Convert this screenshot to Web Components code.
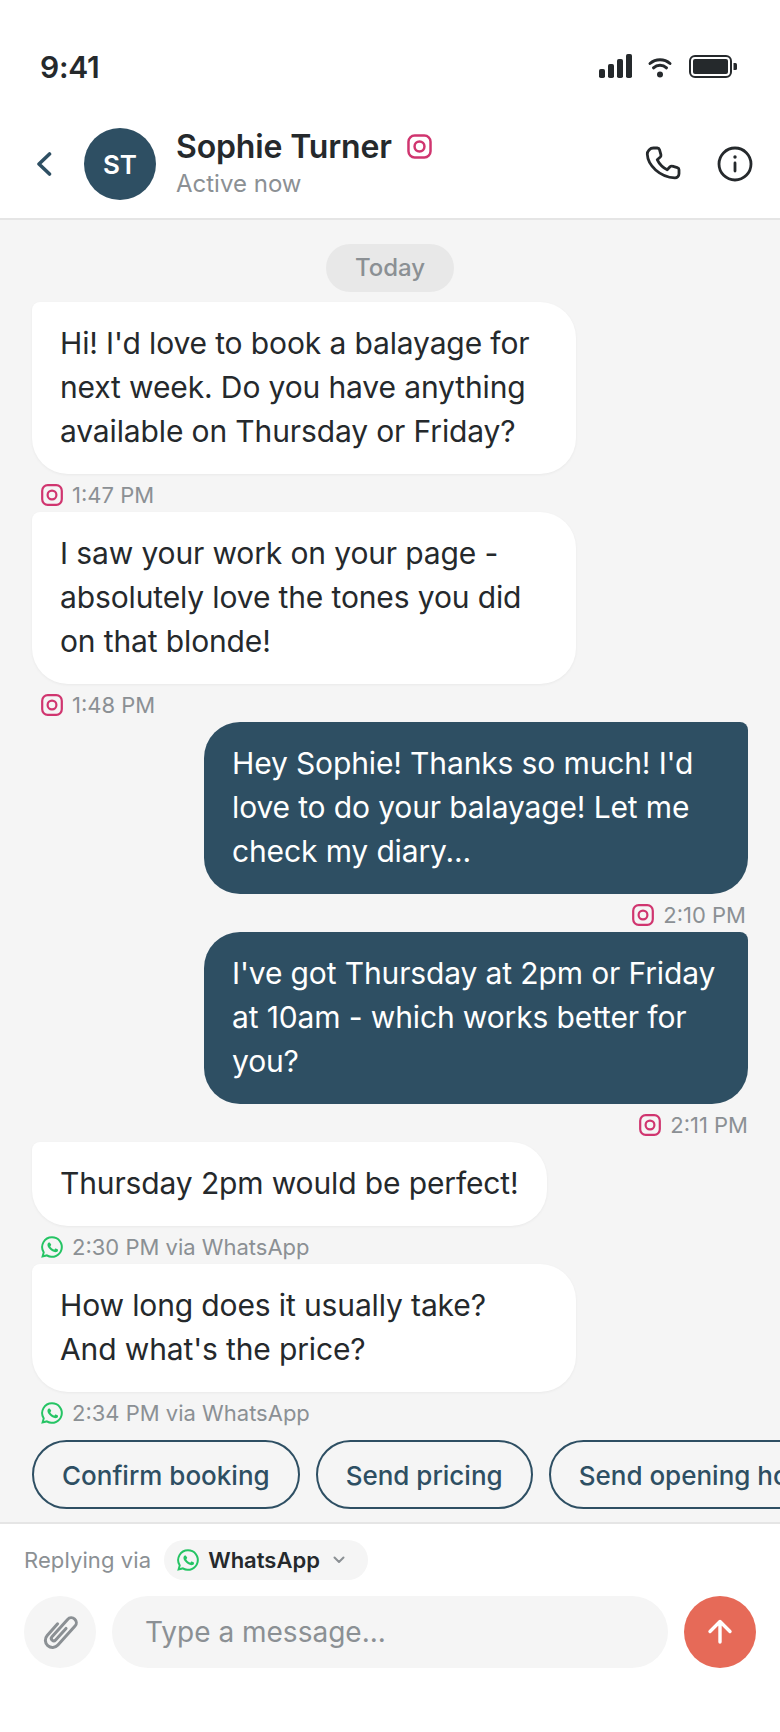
<!DOCTYPE html>
<html><head><meta charset="utf-8"><style>
html,body{margin:0;padding:0;background:#fff}
body{width:780px;height:1732px;overflow:hidden;font-family:Inter,"Liberation Sans",sans-serif;color:#25292c}
chat-app{width:780px;height:1732px}
</style></head><body>
<chat-app>
<status-bar></status-bar>
<chat-header name="Sophie Turner" status="Active now" initials="ST"></chat-header>
<chat-thread>
<day-pill>Today</day-pill>
<chat-msg from="them" via="ig" time="1:47 PM">Hi! I'd love to book a balayage for next week. Do you have anything available on Thursday or Friday?</chat-msg>
<chat-msg from="them" via="ig" time="1:48 PM">I saw your work on your page - absolutely love the tones you did on that blonde!</chat-msg>
<chat-msg from="me" via="ig" time="2:10 PM" inset>Hey Sophie! Thanks so much! I'd love to do your balayage! Let me check my diary...</chat-msg>
<chat-msg from="me" via="ig" time="2:11 PM">I've got Thursday at 2pm or Friday at 10am - which works better for you?</chat-msg>
<chat-msg from="them" via="wa" time="2:30 PM via WhatsApp">Thursday 2pm would be perfect!</chat-msg>
<chat-msg from="them" via="wa" time="2:34 PM via WhatsApp">How long does it usually take? And what's the price?</chat-msg>
</chat-thread>
<quick-replies>
<quick-chip>Confirm booking</quick-chip><quick-chip>Send pricing</quick-chip><quick-chip>Send opening hours</quick-chip>
</quick-replies>
<chat-composer></chat-composer>
</chat-app>
<script>
const IG=s=>`<svg width="${s}" height="${s}" viewBox="0 0 24 24" fill="none" stroke="#d0356f" stroke-width="2.2" style="display:block;flex:none"><rect x="2.200" y="2.200" width="19.600" height="19.600" rx="5.500"/><circle cx="12" cy="12" r="4.400"/></svg>`;
const WA=s=>`<svg width="${s}" height="${s}" viewBox="0 0 24 24" style="display:block;flex:none"><path fill="#25c464" d="M12 1.200A10.800 10.800 0 0 0 2.700 17.500L1.200 22.800l5.500-1.400A10.800 10.800 0 1 0 12 1.200Zm0 2A8.800 8.800 0 1 1 7.400 19.500l-.4-.2-3 .8.8-3-.3-.4A8.800 8.800 0 0 1 12 3.200Z"/><path fill="#25c464" d="M9 6.800c-.3 0-.7.1-1 .5-.4.4-1.100 1.100-1.100 2.500 0 1.500 1.100 3 1.300 3.200.2.200 2.100 3.300 5.200 4.500 2.600 1 3.100.8 3.700.7.600-.1 1.800-.7 2-1.400.3-.7.3-1.300.2-1.400-.1-.2-.3-.2-.6-.4l-2-1c-.3-.1-.5-.2-.7.1l-.9 1.100c-.2.200-.4.300-.7.100-.3-.2-1.300-.5-2.400-1.500-.9-.8-1.500-1.800-1.700-2.100-.2-.3 0-.5.100-.6l.5-.6c.2-.2.200-.3.300-.5.100-.2.100-.4 0-.6L10 7.500c-.3-.6-.5-.7-.8-.7Z" transform="translate(1.600 1.600) scale(.85)"/></svg>`;
function def(name,css,html){customElements.define(name,class extends HTMLElement{connectedCallback(){if(this.shadowRoot)return;const r=this.attachShadow({mode:'open'});r.innerHTML=`<style>${css}</style>`+(typeof html==='function'?html(this):html);}});}
def('chat-app',`:host{display:flex;flex-direction:column;background:#fff}`,`<slot></slot>`);
def('status-bar',`:host{display:flex;align-items:center;justify-content:space-between;height:108px;padding:26px 42px 0 40px;box-sizing:border-box;flex:none}
.t{font-size:30px;font-weight:600;color:#25292c;line-height:36px;letter-spacing:-.3px}.i{display:flex;align-items:center;transform:translateX(-1px)}`,
`<span class="t">9:41</span><div class="i"><svg width="138" height="26" viewBox="0 0 138 26" fill="#25292c" style="display:block">
<rect x="0" y="15" width="6" height="9" rx="1.800"/><rect x="9" y="10" width="6" height="14" rx="1.800"/><rect x="18" y="5" width="6" height="19" rx="1.800"/><rect x="27" y="0" width="6" height="24" rx="1.800"/>
<path d="M51 9.500a15 15 0 0 1 20 0M54.500 13.800a9.500 9.500 0 0 1 13 0" fill="none" stroke="#25292c" stroke-width="3" stroke-linecap="round"/><circle cx="61" cy="20.500" r="3"/>
<rect x="91" y="2" width="41" height="21" rx="5" fill="none" stroke="#25292c" stroke-width="2"/><rect x="94" y="5" width="35" height="15" rx="2"/><path d="M134.500 9h2a1.500 1.500 0 0 1 1.500 1.500v4a1.500 1.500 0 0 1-1.500 1.500h-2Z"/></svg></div>`);
def('chat-header',`:host{display:flex;align-items:center;height:112px;box-sizing:border-box;padding:2px 27px 0 32px;background:#fff;border-bottom:2px solid #e5e5e5;flex:none}
.back{width:52px;flex:none}.av{width:72px;height:72px;border-radius:50%;background:#2e4f63;color:#fff;display:flex;align-items:center;justify-content:center;font-size:26px;font-weight:600;flex:none}
.info{margin-left:20px;flex:1;min-width:0}.n{display:flex;align-items:center;gap:14px;font-size:32px;font-weight:600;line-height:38px;color:#25292c;letter-spacing:-.15px}
.s{font-size:24px;line-height:32px;color:#8b9094;margin-top:2px}.acts{display:flex;gap:36px;align-items:center}.up{transform:translateY(-1px)}`,
h=>`<div class="back"><svg width="20" height="26" viewBox="0 0 20 26" fill="none" stroke="#2e4f63" stroke-width="3.600" stroke-linecap="round" stroke-linejoin="round" style="display:block"><path d="M17.500 3 7 13l10.500 10"/></svg></div>
<div class="av">${h.getAttribute('initials')}</div>
<div class="info"><div class="n">${h.getAttribute('name')}<span class="up">${IG(27)}</span></div><div class="s">${h.getAttribute('status')}</div></div>
<div class="acts"><svg width="36" height="36" viewBox="0 0 36 36" fill="none" stroke="#25292c" stroke-width="2.800" stroke-linejoin="round" stroke-linecap="round" style="display:block"><path d="M8.500 2h3.800c1 0 1.900.700 2.200 1.700l1.400 5c.2.800 0 1.700-.6 2.300l-3.100 2.700c2.200 4.600 5.500 7.900 10 10.100l2.800-3c.6-.6 1.500-.9 2.300-.6l5 1.400c1 .3 1.700 1.200 1.700 2.200v4c0 2.300-1.900 4.200-4.200 4.100C14.800 31 2.800 19.400 2.300 8.300 2.200 5 5 2 8.500 2Z"/></svg>
<svg width="36" height="36" viewBox="0 0 36 36" fill="none" stroke="#25292c" stroke-width="2.800" stroke-linecap="round" style="display:block"><circle cx="18" cy="18" r="16"/><path d="M18 17v8"/><circle cx="18" cy="11" r="1.700" fill="#25292c" stroke="none"/></svg></div>`);
def('chat-thread',`:host{display:flex;flex-direction:column;background:#f5f5f5;flex:1;min-height:0;overflow:hidden;padding:24px 32px 0 32px}`,`<slot></slot>`);
def('day-pill',`:host{display:block;align-self:center;height:48px;line-height:48px;padding:0 29px;background:#e8e8e8;border-radius:24px;color:#8b9094;font-size:24px;font-weight:500;margin:0 0 10px}`,`<slot></slot>`);
def('chat-msg',`:host{display:flex;flex-direction:column;align-items:flex-start;flex:none}
:host([from=me]){align-items:flex-end}
.b{box-sizing:border-box;max-width:544px;padding:19px 28px 21px;background:#fff;color:#25292c;font-size:30px;letter-spacing:-.13px;line-height:44px;border-radius:8px 36px 36px 36px;box-shadow:0 1px 3px rgba(0,0,0,.05)}
:host([from=me]) .b{background:#2e4f63;color:#fff;border-radius:36px 8px 36px 36px;box-shadow:none;width:544px}
.m{display:flex;align-items:center;gap:8px;font-size:22px;line-height:32px;color:#8b9094;padding:5px 8px 1px;height:32px}
:host([from=me]) .m{padding-right:0}:host([inset]) .m{padding-right:2px}`,
h=>`<div class="b"><slot></slot></div><div class="m">${h.getAttribute('via')==='ig'?IG(24):WA(24)}<span>${h.getAttribute('time')}</span></div>`);
def('quick-replies',`:host{display:flex;gap:16px;background:#f5f5f5;padding:8px 0 13px 32px;overflow:hidden;flex:none}`,`<slot></slot>`);
def('quick-chip',`:host{display:block;flex:none;box-sizing:border-box;height:69px;line-height:68px;padding:0 28px;border:2px solid #2e4f63;border-radius:35px;color:#2e4f63;font-size:26px;font-weight:500;white-space:nowrap}`,`<slot></slot>`);
def('chat-composer',`:host{display:block;background:#fff;border-top:2px solid #e5e5e5;padding:16px 24px 64px;flex:none}
.r{display:flex;align-items:center;gap:13px;height:40px}.l{font-size:22px;letter-spacing:.1px;color:#8b9094}
.p{display:flex;align-items:center;gap:8px;height:40px;background:#f5f5f5;border-radius:20px;padding:0 22px 0 12px;font-size:22px;font-weight:600;color:#25292c}
.c{display:flex;align-items:center;gap:16px;margin-top:16px}
.cir{width:72px;height:72px;border-radius:50%;display:flex;align-items:center;justify-content:center;flex:none}
.a{background:#f5f5f5}.s{background:#e66a58}
.i{flex:1;height:72px;border-radius:36px;background:#f5f5f5;display:flex;align-items:center;padding:0 33px;font-size:28px;color:#8b9094}`,
`<div class="r"><span class="l">Replying via</span><div class="p">${WA(24)}<span>WhatsApp</span><svg width="14" height="10" viewBox="0 0 14 10" fill="none" stroke="#8b9094" stroke-width="2" stroke-linecap="round" stroke-linejoin="round" style="margin-left:4px;display:block"><path d="M2.500 2.500 7 7l4.500-4.500"/></svg></div></div>
<div class="c"><div class="cir a"><svg width="40" height="40" viewBox="-18 -18 36 36" fill="none" stroke="#8b9094" stroke-width="2.700" stroke-linecap="round" stroke-linejoin="round" style="display:block"><path transform="rotate(42)" d="M-6.500 -4V10a6.500 6.500 0 0 0 13 0V-13a4.500 4.500 0 0 0-9 0V8a2.200 2.200 0 0 0 4.400 0V-6"/></svg></div>
<div class="i">Type a message...</div>
<div class="cir s"><svg width="32" height="32" viewBox="0 0 32 32" fill="none" stroke="#fff" stroke-width="3.400" stroke-linecap="round" stroke-linejoin="round" style="display:block"><path d="M16 26V5.500M6 15.500l10-10 10 10"/></svg></div></div>`);
</script>
</body></html>
